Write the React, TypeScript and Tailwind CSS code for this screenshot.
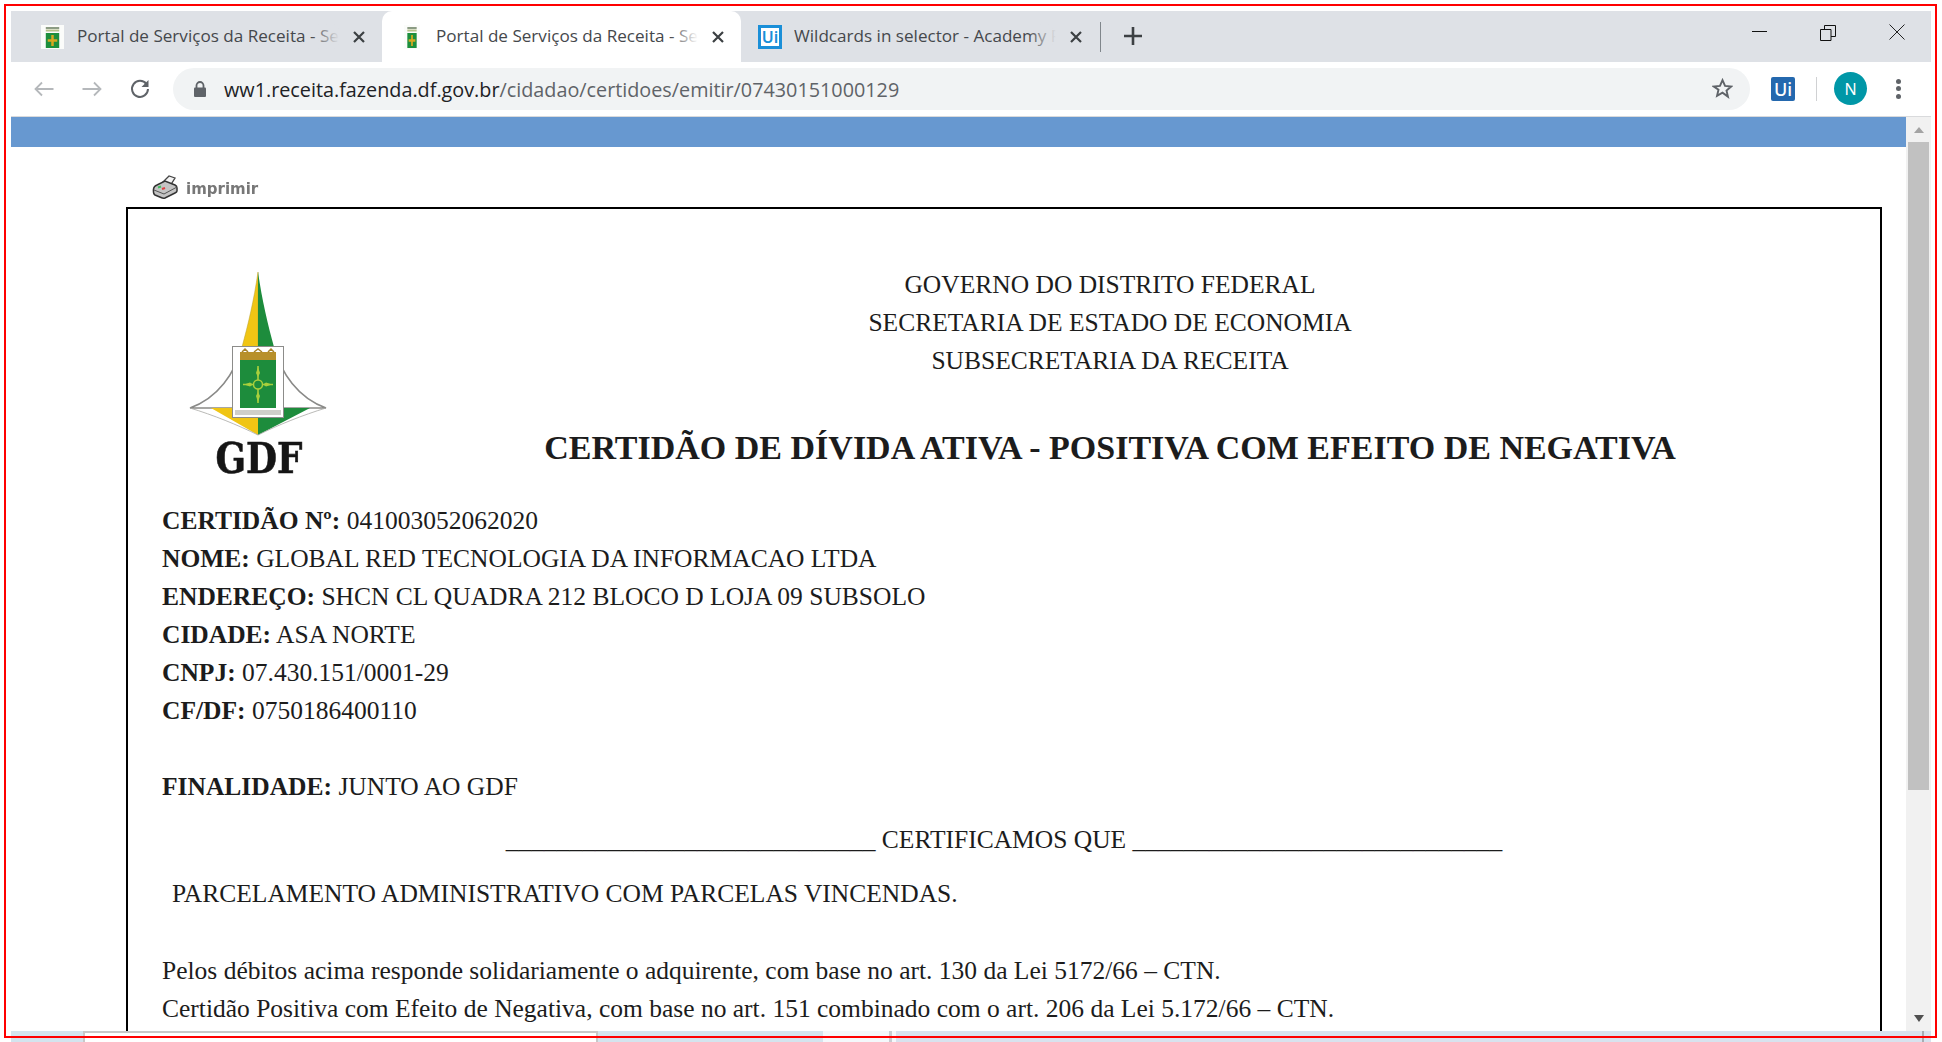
import React from "react";

const Favicon = ({ w }: { w: number }) => (
  <svg width={w} height={24} viewBox="0 0 24 24" preserveAspectRatio="none" className="shrink-0">
    <rect width="24" height="24" fill="#fbfcfa" />
    <rect x="5" y="2" width="14" height="2" fill="#8c9c84" />
    <rect x="5" y="4.500" width="14" height="2" fill="#b5c08a" />
    <rect x="5" y="8" width="14" height="15" fill="#1c8f3c" />
    <path d="M12 10v11M7 15.500h10" stroke="#d8a820" strokeWidth="2.600" />
  </svg>
);

const UiFavicon = () => (
  <div className="flex h-6 w-6 shrink-0 items-center justify-center border-[3px] border-[#1a8fd8] bg-white font-['Noto_Sans',sans-serif] text-[16px] font-semibold leading-none text-[#1a8fd8]">
    Ui
  </div>
);

const CloseX = ({ className }: { className?: string }) => (
  <svg width="12" height="12" viewBox="0 0 12 12" className={className}>
    <path d="M1 1l10 10M11 1L1 11" stroke="#3c4043" strokeWidth="2.200" />
  </svg>
);

const Tab = ({
  active,
  icon,
  title,
  className,
  iconGap,
}: {
  active?: boolean;
  icon: React.ReactNode;
  title: string;
  className: string;
  iconGap: string;
}) => (
  <div
    className={`relative flex h-[51px] items-center ${className} ${
      active ? "rounded-t-[10px] bg-white" : ""
    }`}
  >
    {icon}
    <div className={`relative mb-[2px] h-[26px] w-[262px] overflow-hidden whitespace-nowrap ${iconGap} font-['Open_Sans',sans-serif] text-[17.100px] leading-[26px] text-[#45484c]`}>
      {title}
      <div
        className={`absolute inset-y-0 right-0 w-7 bg-gradient-to-r from-transparent ${
          active ? "to-white" : "to-[#dee1e6]"
        }`}
      />
    </div>
    <CloseX className="ml-[14px] shrink-0" />
  </div>
);

const Logo = () => (
  <svg width="140" height="206" viewBox="0 0 140 206" className="blur-[0.4px]">
    <path d="M70 2 C66 30 60 55 54 77 L70 77 Z" fill="#f0c514" stroke="#b8a030" strokeWidth="0.500" />
    <path d="M70 2 C74 30 80 55 86 77 L70 77 Z" fill="#1d8c3c" />
    <path d="M54 77 C47 103 30 128 2 138 L44 138" fill="none" stroke="#8a8a88" strokeWidth="1.600" />
    <path d="M86 77 C93 103 110 128 138 138 L96 138" fill="none" stroke="#8a8a88" strokeWidth="1.600" />
    <path d="M23 138 L44 138 L44 148 L70 148 L70 165 Z" fill="#f0c514" />
    <path d="M122 138 L96 138 L96 148 L70 148 L70 165 Z" fill="#1d8c3c" />
    <path d="M2 138 C25 145 50 155 70 165 C90 155 115 145 138 138" fill="none" stroke="#a8a8a4" strokeWidth="0.800" />
    <rect x="44.500" y="76.500" width="51" height="71" fill="#fff" stroke="#8c8c8a" strokeWidth="1" />
    <path d="M52 82 H88 V90 H52 Z" fill="#b8902a" />
    <path d="M54 82 l3 -3 l3 3 M66 82 l4 -3 l4 3 M80 82 l3 -3 l3 3" fill="none" stroke="#a8832a" strokeWidth="1.500" />
    <rect x="52" y="90" width="36" height="48" fill="#1d8c3c" />
    <path d="M70 96 V133 M55 114.500 H85" stroke="#a8cf3c" strokeWidth="1.600" />
    <circle cx="70" cy="114.500" r="4.500" fill="#1d8c3c" stroke="#a8cf3c" strokeWidth="1.500" />
    <path d="M70 97 l-2 6 l2 4 l2 -4 Z M70 132 l-2 -6 l2 -4 l2 4 Z M56 114.500 l6 -2 l3 2 l-3 2 Z M84 114.500 l-6 -2 l-3 2 l3 2 Z" fill="#a8cf3c" />
    <rect x="47" y="140" width="46" height="5" fill="#cfcfca" />
    <text
      x="71"
      y="203"
      textAnchor="middle"
      fontFamily="'DejaVu Serif', serif"
      fontWeight="700"
      fontSize="42"
      fill="#151515"
      stroke="#151515"
      strokeWidth="0.600"
      textLength="87"
      lengthAdjust="spacingAndGlyphs"
    >
      GDF
    </text>
  </svg>
);

const Printer = () => (
  <svg width="26" height="24" viewBox="0 0 26 24" className="blur-[0.5px]">
    <path d="M10 8 L17 1 L23 3 L18 11 Z" fill="#f4f4f4" stroke="#444" strokeWidth="1.300" />
    <path d="M1.500 14 Q2 11 5 10 L13 6 L23 10 Q25 11 25 13 L25 16 Q25 17 23 18 L13 23 Q11 23.500 9 22.500 L3 20 Q1 19 1.500 14 Z" fill="#c4c4c4" stroke="#333" strokeWidth="1.500" />
    <path d="M2 15 L12 19 L25 12" fill="none" stroke="#555" strokeWidth="1" />
    <path d="M6 12.500 l3 -1" stroke="#3fbf5f" strokeWidth="2" />
    <path d="M10 14 l3 -1" stroke="#e04040" strokeWidth="2" />
  </svg>
);

const Field = ({ label, value }: { label: string; value: string }) => (
  <div>
    <b>{label}</b> {value}
  </div>
);

export default function App() {
  return (
    <div className="relative h-[1042px] w-[1942px] overflow-hidden bg-white pl-[11px] pr-[11px] pt-[11px]">
      {/* browser chrome */}
      <div className="flex h-[51px] items-center bg-[#dee1e6]">
        <div className="flex">
          <Tab
            className="w-[371px] pl-[30px]"
            icon={<Favicon w={23} />}
            iconGap="ml-[13px]"
            title="Portal de Serviços da Receita - Secretaria de Economia"
          />
          <Tab
            active
            className="w-[359px] pl-[22px]"
            icon={<Favicon w={16} />}
            iconGap="ml-4"
            title="Portal de Serviços da Receita - Secretaria de Economia"
          />
          <Tab
            className="w-[360px] pl-[17px]"
            icon={<UiFavicon />}
            iconGap="ml-3"
            title="Wildcards in selector - Academy Feedback"
          />
        </div>
        <div className="ml-[-1px] h-[30px] w-px bg-[#80868b]" />
        <svg width="18" height="18" viewBox="0 0 18 18" className="mb-[2px] ml-[23px]">
          <path d="M9 0v18M0 9h18" stroke="#3c4043" strokeWidth="2.600" />
        </svg>
        <div className="flex-1" />
        <svg width="15" height="15" viewBox="0 0 15 15" className="mb-[6px]">
          <path d="M0 5.500h15" stroke="#111" strokeWidth="1" />
        </svg>
        <svg width="16" height="16" viewBox="0 0 16 16" className="mb-[8px] ml-[53px]">
          <path d="M0.500 4.500h10.500v11H0.500z M4.500 4.500V0.500H15.500V11.500H11" fill="none" stroke="#111" strokeWidth="1" />
        </svg>
        <svg width="16" height="16" viewBox="0 0 16 16" className="mb-[9px] ml-[53px] mr-[26px]">
          <path d="M0.500 0.500l15 15M15.500 0.500l-15 15" stroke="#222" strokeWidth="1" />
        </svg>
      </div>

      <div className="flex h-[55px] items-center border-b border-[#d9dadc] bg-white pb-px">
        <svg width="20" height="16" viewBox="0 0 20 16" className="ml-[23px]">
          <path d="M19.500 8H1.500M8 1.500L1.500 8L8 14.500" fill="none" stroke="#b5b8bb" strokeWidth="1.800" />
        </svg>
        <svg width="20" height="16" viewBox="0 0 20 16" className="ml-[28px]">
          <path d="M0.500 8H18.500M12 1.500L18.500 8L12 14.500" fill="none" stroke="#b5b8bb" strokeWidth="1.800" />
        </svg>
        <svg width="20" height="20" viewBox="0 0 20 20" className="ml-[28px]">
          <path d="M16.500 5.200A8 8 0 1 0 18 10" fill="none" stroke="#5f6368" strokeWidth="2" />
          <path d="M18.500 1v7h-7z" fill="#5f6368" />
        </svg>
        <div className="ml-[23px] flex h-[42px] w-[1577px] items-center rounded-full bg-[#f1f3f4] pl-[21px] pr-[17px]">
          <svg width="12" height="16" viewBox="0 0 12 16">
            <path d="M2.500 7V4.500a3.500 3.500 0 0 1 7 0V7" fill="none" stroke="#5f6368" strokeWidth="1.800" />
            <rect y="6.500" width="12" height="9.500" rx="1" fill="#5f6368" />
          </svg>
          <div className="ml-[18px] mt-[2px] whitespace-nowrap font-['Open_Sans',sans-serif] text-[19.800px] text-[#5f6368]">
            <span className="text-[#202124]">ww1.receita.fazenda.df.gov.br</span>/cidadao/certidoes/emitir/07430151000129
          </div>
          <div className="flex-1" />
          <svg width="21" height="21" viewBox="0 0 24 24">
            <path d="M12 2.500l2.900 6.500 7 .7-5.300 4.700 1.600 6.900L12 16.700l-6.200 3.600 1.600-6.900L2.100 9.700l7-.7z" fill="none" stroke="#5f6368" strokeWidth="2.200" />
          </svg>
        </div>
        <div className="ml-[21px] flex h-6 w-6 items-center justify-center rounded-[2px] bg-[#2468ae] font-['Noto_Sans',sans-serif] text-[18px] font-medium leading-none text-white">
          Ui
        </div>
        <div className="ml-[21px] h-6 w-px bg-[#d0d1d3]" />
        <div className="ml-[17px] flex h-[33px] w-[33px] items-center justify-center rounded-full bg-[#0097a7] font-['Noto_Sans',sans-serif] text-[16px] text-white">
          N
        </div>
        <div className="ml-[29px] flex flex-col gap-[2.500px]">
          <div className="h-[5px] w-[5px] rounded-full bg-[#5f6368]" />
          <div className="h-[5px] w-[5px] rounded-full bg-[#5f6368]" />
          <div className="h-[5px] w-[5px] rounded-full bg-[#5f6368]" />
        </div>
      </div>

      {/* page */}
      <div className="flex h-[914px]">
        <div className="min-w-0 flex-1 overflow-hidden">
          <div className="h-[30px] bg-[#6798d0]" />
          <div className="flex h-[60px] items-start pl-[141px] pt-[28px]">
            <Printer />
            <span className="ml-[8px] mt-1 font-['DejaVu_Sans',sans-serif] text-[15px] font-bold leading-[20px] text-[#777777] blur-[0.6px]">
              imprimir
            </span>
          </div>
          <div className="ml-[115px] h-[840px] w-[1756px] border-2 border-b-0 border-black pt-[57px] font-['Liberation_Serif',serif] text-[25.500px] leading-[38px] text-[#1c1c1c]">
            <div className="flex">
              <div className="ml-[60px] w-[152px] shrink-0 pt-1">
                <Logo />
              </div>
              <div className="flex-1 text-center">
                <div>GOVERNO DO DISTRITO FEDERAL</div>
                <div>SECRETARIA DE ESTADO DE ECONOMIA</div>
                <div>SUBSECRETARIA DA RECEITA</div>
                <div className="mt-[49px] text-[34px] font-bold">
                  CERTIDÃO DE DÍVIDA ATIVA - POSITIVA COM EFEITO DE NEGATIVA
                </div>
              </div>
            </div>
            <div className="mt-[26px] pl-[34px]">
              <Field label="CERTIDÃO Nº:" value="041003052062020" />
              <Field label="NOME:" value="GLOBAL RED TECNOLOGIA DA INFORMACAO LTDA" />
              <Field label="ENDEREÇO:" value="SHCN CL QUADRA 212 BLOCO D LOJA 09 SUBSOLO" />
              <Field label="CIDADE:" value="ASA NORTE" />
              <Field label="CNPJ:" value="07.430.151/0001-29" />
              <Field label="CF/DF:" value="0750186400110" />
              <div className="mt-[38px]">
                <Field label="FINALIDADE:" value="JUNTO AO GDF" />
              </div>
              <div className="mt-[15px] -ml-[34px] text-center">
                _____________________________ CERTIFICAMOS QUE _____________________________
              </div>
              <div className="mt-4 pl-[10px]">PARCELAMENTO ADMINISTRATIVO COM PARCELAS VINCENDAS.</div>
              <div className="mt-[39px]">
                Pelos débitos acima responde solidariamente o adquirente, com base no art. 130 da Lei 5172/66 – CTN.
              </div>
              <div>
                Certidão Positiva com Efeito de Negativa, com base no art. 151 combinado com o art. 206 da Lei 5.172/66 – CTN.
              </div>
            </div>
          </div>
        </div>
        {/* scrollbar */}
        <div className="flex w-[25px] shrink-0 flex-col items-center bg-[#f1f1f1]">
          <div className="mt-[10px] h-0 w-0 border-x-[5.500px] border-b-[6px] border-x-transparent border-b-[#a3a3a3]" />
          <div className="mt-[9px] h-[648px] w-[21px] bg-[#c1c1c1]" />
          <div className="flex-1" />
          <div className="mb-[9px] h-0 w-0 border-x-[5.500px] border-t-[7px] border-x-transparent border-t-[#505050]" />
        </div>
      </div>

      {/* desktop sliver behind the screenshot */}
      <div className="flex h-[11px] pl-0">
        <div className="w-[72px] bg-[#d3e4ee]" />
        <div className="w-[515px] border-l-2 border-t-2 border-r-2 border-[#c8c8c8] bg-white" />
        <div className="w-[225px] bg-[#d4e4ee]" />
        <div className="w-[66px] bg-[#f4f8fb]" />
        <div className="w-[3px] bg-[#c8cdd2]" />
        <div className="w-1 bg-[#f4f8fb]" />
        <div className="relative flex-1 bg-[#d8e2ee]">
          <div className="absolute inset-y-0 right-[7px] w-[2px] bg-[#a8acb2]" />
        </div>
      </div>

      {/* red annotation frame over the screenshot */}
      <div className="pointer-events-none absolute left-1 top-1 h-[1034px] w-[1933px] border-2 border-[#ff0000]" />
    </div>
  );
}
